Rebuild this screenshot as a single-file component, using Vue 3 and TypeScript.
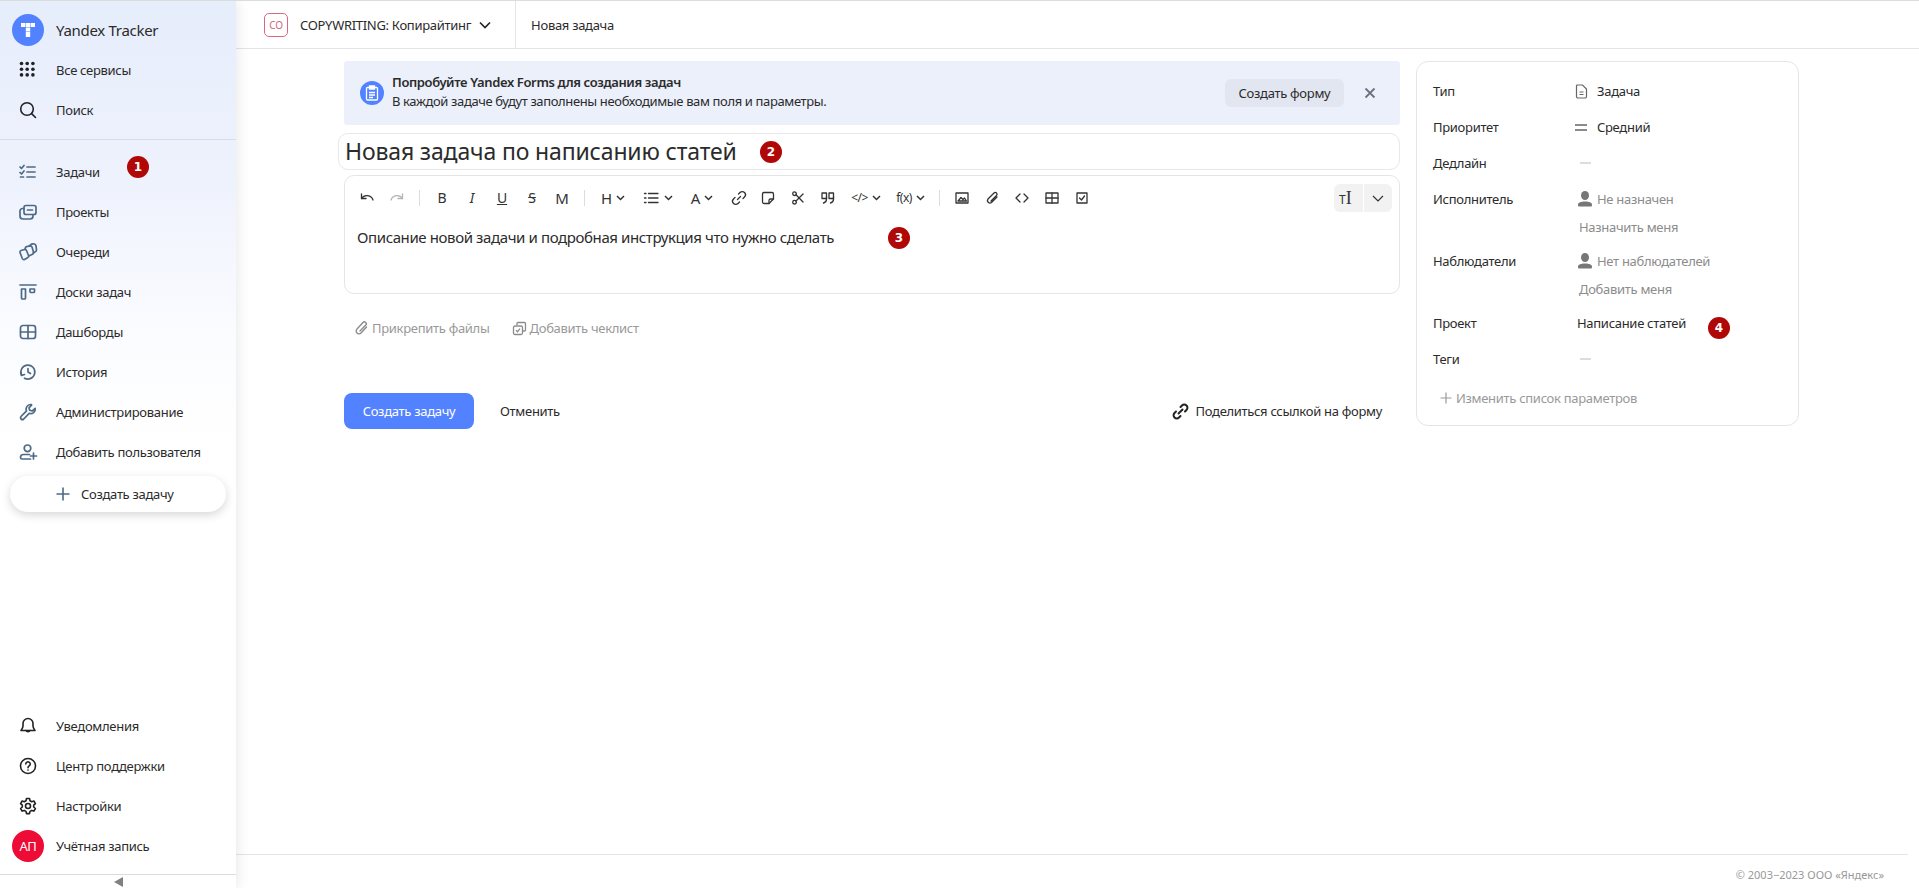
<script setup lang="ts">
interface NavItem {
  label: string;
  icon: string[];
}

const topNav: NavItem[] = [
  { label: "Задачи", icon: ["M2 5l1.5 1.5L6 3.5", "M2 10.5l1.5 1.5L6 9", "M2.5 15h3", "M9 5h8", "M9 10h8", "M9 15h8"] },
  { label: "Проекты", icon: ["M8 3.500h8a2 2 0 0 1 2 2v5a2 2 0 0 1-2 2H8a2 2 0 0 1-2-2v-5a2 2 0 0 1 2-2z", "M9.500 8h5", "M6 6.500H4.500a2.500 2.500 0 0 0-2.500 2.500v5a3 3 0 0 0 3 3h7a3 3 0 0 0 3-3v-1.500"] },
  { label: "Очереди", icon: ["M3 8.500L6.500 7.500Q8 7.200 8.500 8.500L10.500 13.500Q11 15 9.500 15.800L6.500 17.500Q5 18 4.300 16.500L2 10.500Q1.800 9 3 8.500z", "M7 7.500L7.500 5.500Q8 4.500 9.500 4.300L12 3.800Q13.500 3.800 14 5L15.500 10Q16 11.500 14.500 12.200L10.800 14", "M11.800 3.800L12.500 2.800Q13.500 1.800 15 1.800L16.500 2Q17.800 2.500 18 3.800L18.500 8Q18.500 9.500 17 10L15.300 10.800"] },
  { label: "Доски задач", icon: ["M2 3h16", "M3.500 7h4v9a1 1 0 0 1-1 1h-2a1 1 0 0 1-1-1z", "M12 7h4.500v2.500a1 1 0 0 1-1 1H13a1 1 0 0 1-1-1z"] },
  { label: "Дашборды", icon: ["M5 3.500h10A2.500 2.500 0 0 1 17.500 6v8a2.500 2.500 0 0 1-2.500 2.500H5A2.500 2.500 0 0 1 2.500 14V6A2.500 2.500 0 0 1 5 3.500z", "M10 3.500v13", "M2.500 10h15"] },
  { label: "История", icon: ["M3.500 13a7 7 0 1 1 3 3.200", "M3 10.500l.5 3 3-1", "M10 6.500V10l2.500 1.500"] },
  { label: "Администрирование", icon: ["M12.500 2.500a4.500 4.500 0 0 0-4 6.300L3 14.500a2 2 0 0 0 0 2.500 2 2 0 0 0 2.700 0l5.500-5.700a4.500 4.500 0 0 0 6-5l-3 2.700-2.500-.7-.7-2.500 2.700-2.800a4.500 4.500 0 0 0-.7-.5z"] },
  { label: "Добавить пользователя", icon: ["M9.500 3a3.300 3.300 0 1 0 0 6.600 3.300 3.300 0 0 0 0-6.600z", "M11.500 12.500H5.500a3 3 0 0 0-3 3 1.500 1.500 0 0 0 1.500 1.500h8.500", "M15.500 11v6", "M12.500 14h6"] },
];

const bottomNav: NavItem[] = [
  { label: "Уведомления", icon: ["M10 2.500a5 5 0 0 0-5 5v2.500c0 2-.8 3-2 4.500h14c-1.200-1.500-2-2.500-2-4.500V7.500a5 5 0 0 0-5-5z", "M8 14.500a2.200 2.200 0 0 0 4 0"] },
  { label: "Центр поддержки", icon: ["M10 2.500a7.500 7.500 0 1 0 0 15 7.500 7.500 0 0 0 0-15z", "M7.800 8a2.200 2.200 0 1 1 3.400 1.900c-.8.500-1.200 1-1.200 1.800", "M10 14v.1"] },
  { label: "Настройки", icon: ["M8.500 2.500h3l.5 2.200 1.700 1 2.200-.7 1.500 2.600-1.700 1.500v1.900l1.700 1.500-1.500 2.600-2.200-.7-1.700 1-.5 2.200h-3l-.5-2.200-1.700-1-2.200.7-1.500-2.600L4.300 11V9.100L2.600 7.600l1.500-2.600 2.200.7 1.700-1z", "M10 7.500a2.500 2.500 0 1 0 0 5 2.500 2.500 0 0 0 0-5z"] },
];

interface ToolIcon {
  w: number;
  text?: string;
  cls?: string;
  icon?: string[];
  chevron?: boolean;
  sep?: boolean;
}

const chevron = "M1 1l3.500 3.500L8 1";

const tools: ToolIcon[] = [
  { w: 30, icon: ["M3.500 5v4.500H8", "M3.500 9.500a6.500 6.500 0 0 1 11.500 1.500"] },
  { w: 30, cls: "dim", icon: ["M14.500 5v4.500H10", "M14.500 9.500A6.500 6.500 0 0 0 3 11"] },
  { w: 1, sep: true },
  { w: 30, text: "B", cls: "t-b" },
  { w: 30, text: "I", cls: "t-i" },
  { w: 30, text: "U", cls: "t-u" },
  { w: 30, text: "S", cls: "t-s" },
  { w: 30, text: "M", cls: "t-m" },
  { w: 1, sep: true },
  { w: 42, text: "H", cls: "t-h", chevron: true },
  { w: 46, icon: ["M6.500 4.500H16", "M6.500 9H16", "M6.500 13.500H16", "M2.500 4.500h1.500", "M2.500 9h1.500", "M2.500 13.500h1.500"], chevron: true },
  { w: 44, text: "A", cls: "t-h", chevron: true },
  { w: 29, icon: ["M7.500 10.500l3-3", "M8.500 5l1.500-1.500a3 3 0 0 1 4.500 4.500L13 9.500", "M5 8.500L3.500 10a3 3 0 0 0 4.500 4.500L9.500 13"] },
  { w: 30, icon: ["M5 3.500h8a1.500 1.500 0 0 1 1.500 1.500v5l-4.500 4.500H5A1.500 1.500 0 0 1 3.500 13V5A1.500 1.500 0 0 1 5 3.500z", "M10 14.500v-3a1.500 1.500 0 0 1 1.500-1.500h3"] },
  { w: 30, icon: ["M5.500 6.500a1.800 1.800 0 1 0 0-3.600 1.800 1.800 0 0 0 0 3.600z", "M5.500 15a1.800 1.800 0 1 0 0-3.600 1.800 1.800 0 0 0 0 3.600z", "M7 5.800L14 13", "M7 12L14 5"] },
  { w: 30, icon: ["M3 4h4.500v5.500H3z", "M10 4h4.500v5.500H10z", "M7.500 8v2a4 4 0 0 1-3 4", "M14.500 8v2a4 4 0 0 1-3 4"] },
  { w: 46, text: "</>", cls: "t-c", chevron: true },
  { w: 43, text: "f(x)", cls: "t-f", chevron: true },
  { w: 1, sep: true },
  { w: 30, icon: ["M3 4h12v10H3z", "M5 12l3-3.500 2 2 1.500-1.500 2 3z"] },
  { w: 30, icon: ["M14 8l-5.500 5.500a2.500 2.500 0 0 1-3.500-3.500L11 4a1.700 1.700 0 0 1 2.500 2.500L8 12"] },
  { w: 30, icon: ["M7 5L3 9l4 4", "M11 5l4 4-4 4"] },
  { w: 30, icon: ["M3 4h12v10H3z", "M3 9h12", "M9 4v10"] },
  { w: 30, icon: ["M4 4h10v10H4z", "M6.500 9l2 2 3-4"] },
];

interface Field {
  label: string;
  value: string;
  kind: "doc" | "prio" | "dash" | "user" | "plain";
  muted?: boolean;
  action?: string;
}

const fields: Field[] = [
  { label: "Тип", value: "Задача", kind: "doc" },
  { label: "Приоритет", value: "Средний", kind: "prio" },
  { label: "Дедлайн", value: "", kind: "dash" },
  { label: "Исполнитель", value: "Не назначен", kind: "user", muted: true, action: "Назначить меня" },
  { label: "Наблюдатели", value: "Нет наблюдателей", kind: "user", muted: true, action: "Добавить меня" },
  { label: "Проект", value: "Написание статей", kind: "plain" },
  { label: "Теги", value: "", kind: "dash" },
];
</script>

<template>
  <div class="page">
    <aside class="sidebar">
      <div class="side-head">
        <div class="row brand">
          <span class="logo">
            <svg width="16" height="16" viewBox="0 0 16 16"><path fill="#fff" d="M1 1h4.300v4H1zM5.800 1h4.400v4H5.800zM10.700 1H15v4h-4.300zM5.800 5.500h4.400v3.700H5.800zM5.800 9.700h4.400V15H5.800z" /></svg>
          </span>
          <span class="brand-name">Yandex Tracker</span>
        </div>
        <div class="row">
          <span class="ico">
            <svg width="20" height="20" viewBox="0 0 20 20" fill="#222"><g v-for="y in [3.500, 9.200, 14.900]" :key="y"><circle v-for="x in [3.500, 9.200, 14.900]" :key="x" :cx="x" :cy="y" r="1.800" /></g></svg>
          </span>
          Все сервисы
        </div>
        <div class="row">
          <span class="ico">
            <svg width="20" height="20" viewBox="0 0 20 20" fill="none" stroke="#222" stroke-width="1.600" stroke-linecap="round"><circle cx="9" cy="9" r="6.300" /><path d="M13.600 13.600L17.500 17.500" /></svg>
          </span>
          Поиск
        </div>
      </div>

      <nav class="side-nav">
        <div v-for="item in topNav" :key="item.label" class="row">
          <span class="ico">
            <svg width="20" height="20" viewBox="0 0 20 20" fill="none" stroke="#4d6a85" stroke-width="1.700" stroke-linecap="round" stroke-linejoin="round"><path v-for="d in item.icon" :key="d" :d="d" /></svg>
          </span>
          {{ item.label }}
        </div>
        <button class="create-pill">
          <svg width="16" height="16" viewBox="0 0 16 16" fill="none" stroke="#4d6a85" stroke-width="1.600"><path d="M8 1.500v13M1.500 8h13" /></svg>
          Создать задачу
        </button>
      </nav>

      <div class="side-bottom">
        <div v-for="item in bottomNav" :key="item.label" class="row">
          <span class="ico">
            <svg width="20" height="20" viewBox="0 0 20 20" fill="none" stroke="#222" stroke-width="1.600" stroke-linecap="round" stroke-linejoin="round"><path v-for="d in item.icon" :key="d" :d="d" /></svg>
          </span>
          {{ item.label }}
        </div>
        <div class="row">
          <span class="avatar">АП</span>
          Учётная запись
        </div>
      </div>
      <div class="collapse"><span class="tri"></span></div>
    </aside>

    <div class="main">
      <header class="topbar">
        <span class="queue-badge">CO</span>
        <span class="queue-name">COPYWRITING: Копирайтинг</span>
        <svg class="queue-chev" width="12" height="8" viewBox="0 0 12 8" fill="none" stroke="#222" stroke-width="1.600"><path d="M1 1.500l5 5 5-5" /></svg>
        <span class="crumb-sep"></span>
        <span class="crumb">Новая задача</span>
      </header>

      <div class="content">
        <div class="form">
          <div class="banner">
            <span class="banner-ico">
              <svg width="14" height="16" viewBox="0 0 14 16" fill="none" stroke="#fff" stroke-width="1.300"><path d="M4 2.500H2.500a1 1 0 0 0-1 1V14a1 1 0 0 0 1 1h9a1 1 0 0 0 1-1V3.500a1 1 0 0 0-1-1H10" /><path fill="#fff" d="M4.500 1h5v3h-5z" /><path d="M4 7.500h6M4 10h6M4 12.500h4" /></svg>
            </span>
            <div class="banner-text">
              <div class="banner-title">Попробуйте Yandex Forms для создания задач</div>
              <div>В каждой задаче будут заполнены необходимые вам поля и параметры.</div>
            </div>
            <button class="banner-btn">Создать форму</button>
            <svg class="banner-close" width="12" height="12" viewBox="0 0 12 12" fill="none" stroke="#6b7280" stroke-width="1.800"><path d="M1.500 1.500l9 9M10.500 1.500l-9 9" /></svg>
          </div>

          <div class="title-input">Новая задача по написанию статей</div>

          <div class="editor">
            <div class="toolbar">
              <template v-for="(tool, i) in tools" :key="i">
                <span v-if="tool.sep" class="tool-sep"></span>
                <span v-else class="tool" :class="tool.cls" :style="{ width: tool.w + 'px' }">
                  <svg v-if="tool.icon" width="18" height="18" viewBox="0 0 18 18" fill="none" stroke="currentColor" stroke-width="1.300" stroke-linecap="round" stroke-linejoin="round"><path v-for="d in tool.icon" :key="d" :d="d" /></svg>
                  <span v-if="tool.text" class="tool-text">{{ tool.text }}</span>
                  <svg v-if="tool.chevron" class="tool-chev" width="9" height="6" viewBox="0 0 9 6" fill="none" stroke="currentColor" stroke-width="1.500"><path :d="chevron" /></svg>
                </span>
              </template>
              <div class="mode">
                <span class="mode-l">T<span class="cursor">I</span></span>
                <span class="mode-r">
                  <svg width="12" height="7" viewBox="0 0 12 7" fill="none" stroke="#333" stroke-width="1.200"><path d="M1 1l5 5 5-5" /></svg>
                </span>
              </div>
            </div>
            <div class="editor-text">Описание новой задачи и подробная инструкция что нужно сделать</div>
          </div>

          <div class="attach">
            <span class="attach-item">
              <svg width="15" height="16" viewBox="0 0 15 16" fill="none" stroke="#8c8c8c" stroke-width="1.400" stroke-linecap="round"><path d="M12.500 7l-5.500 6a2.800 2.800 0 0 1-4-4l6-6.500a1.900 1.900 0 0 1 2.800 2.600L6 11" /></svg>
              Прикрепить файлы
            </span>
            <span class="attach-item">
              <svg width="15" height="15" viewBox="0 0 15 15" fill="none" stroke="#8c8c8c" stroke-width="1.300"><path d="M5 4V2.500a1 1 0 0 1 1-1h6.500a1 1 0 0 1 1 1V9a1 1 0 0 1-1 1H11" /><rect x="1.500" y="5" width="9" height="8.500" rx="1.500" /><path d="M4 9.200l1.500 1.500 2.500-3" /></svg>
              Добавить чеклист
            </span>
          </div>

          <div class="actions">
            <button class="btn-primary">Создать задачу</button>
            <span class="cancel">Отменить</span>
            <span class="share">
              <svg width="17" height="17" viewBox="0 0 17 17" fill="none" stroke="#222" stroke-width="2" stroke-linecap="round"><path d="M6.500 10.500l4-4" /><path d="M8.500 4l1.500-1.500a3 3 0 0 1 4.500 4.500L13 8.500" /><path d="M4 8.500L2.500 10a3 3 0 0 0 4.500 4.500L8.500 13" /></svg>
              Поделиться ссылкой на форму
            </span>
          </div>
        </div>

        <section class="params">
          <div v-for="f in fields" :key="f.label" class="param" :class="{ tall: f.action }">
            <div class="param-label">{{ f.label }}</div>
            <div class="param-value">
              <div class="param-line" :class="{ muted: f.muted, plain: f.kind === 'plain' }">
                <svg v-if="f.kind === 'doc'" class="pi-doc" width="13" height="15" viewBox="0 0 13 15" fill="none" stroke="#666" stroke-width="1.200"><path d="M2.500 1h5L11.500 5v7.500a1.500 1.500 0 0 1-1.500 1.500H3a1.500 1.500 0 0 1-1.500-1.500V2a1 1 0 0 1 1-1z" /><path d="M4.500 8h4M4.500 10.500h4" /></svg>
                <svg v-if="f.kind === 'prio'" class="pi-prio" width="12" height="7" viewBox="0 0 12 7" fill="none" stroke="#666" stroke-width="1.300"><path d="M0 1h12M0 6h12" /></svg>
                <span v-if="f.kind === 'dash'" class="dash"></span>
                <svg v-if="f.kind === 'user'" class="pi-user" width="14" height="16" viewBox="0 0 14 16" fill="#777"><ellipse cx="7" cy="4.500" rx="4" ry="4.500" /><path d="M0 13.500c0-2 3-3 7-3s7 1 7 3v1a1 1 0 0 1-1 1H1a1 1 0 0 1-1-1z" /></svg>
                <span v-if="f.value">{{ f.value }}</span>
              </div>
              <div v-if="f.action" class="param-action">{{ f.action }}</div>
            </div>
          </div>
          <div class="param-edit">
            <svg width="12" height="12" viewBox="0 0 12 12" fill="none" stroke="#999" stroke-width="1.200"><path d="M6 .5v11M.5 6h11" /></svg>
            Изменить список параметров
          </div>
        </section>
      </div>

      <footer class="footer">© 2003−2023 ООО «Яндекс»</footer>
    </div>

    <span class="mark m1">1</span>
    <span class="mark m2">2</span>
    <span class="mark m3">3</span>
    <span class="mark m4">4</span>
  </div>
</template>

<style>
html, body {
  margin: 0;
  background: #fff;
}
</style>

<style scoped>
.page {
  position: relative;
  display: flex;
  height: 888px;
  box-sizing: border-box;
  border-top: 1px solid #dcdcdc;
  overflow: hidden;
  font-family: "Noto Sans", "Open Sans", sans-serif;
  font-size: 13px;
  letter-spacing: -0.3px;
  color: #2b2b2b;
}

.sidebar {
  width: 236px;
  flex: none;
  display: flex;
  flex-direction: column;
  background: linear-gradient(180deg, #e6edfb 0%, #eef2fd 20%, #fbfcff 38%, #fff 50%);
  box-shadow: 2px 0 12px rgba(0, 0, 0, 0.09);
  z-index: 1;
}

.row {
  display: flex;
  align-items: center;
  height: 40px;
  padding-left: 18px;
  gap: 18px;
  white-space: nowrap;
}

.ico {
  width: 20px;
  height: 20px;
  display: flex;
}

.side-head {
  padding-top: 9px;
  height: 139px;
  box-sizing: border-box;
  border-bottom: 1px solid #d9dde3;
}

.brand {
  padding-left: 12px;
  gap: 12px;
}

.logo {
  width: 32px;
  height: 32px;
  border-radius: 50%;
  background: #5282ff;
  display: flex;
  align-items: center;
  justify-content: center;
}

.brand-name {
  font-size: 15px;
}

.side-nav {
  padding-top: 12px;
}

.create-pill {
  margin: 4px 10px 0;
  width: 216px;
  height: 36px;
  border: none;
  border-radius: 18px;
  background: #fff;
  box-shadow: 0 3px 10px rgba(0, 0, 0, 0.16);
  display: flex;
  align-items: center;
  gap: 10px;
  padding: 0 0 0 45px;
  font: inherit;
  letter-spacing: inherit;
  color: inherit;
}

.side-bottom {
  margin-top: auto;
}

.avatar {
  width: 32px;
  height: 32px;
  margin-left: -6px;
  margin-right: -6px;
  border-radius: 50%;
  background: #ec0c36;
  color: #fff;
  font-size: 13px;
  display: flex;
  align-items: center;
  justify-content: center;
}

.collapse {
  margin-top: 8px;
  height: 13px;
  border-top: 1px solid #dcdcdc;
  display: flex;
  justify-content: center;
  align-items: center;
}

.tri {
  width: 0;
  height: 0;
  border-style: solid;
  border-width: 5px 9px 5px 0;
  border-color: transparent #808080 transparent transparent;
}

.main {
  flex: 1;
  min-width: 0;
  display: flex;
  flex-direction: column;
}

.topbar {
  height: 48px;
  flex: none;
  box-sizing: border-box;
  border-bottom: 1px solid #e5e5e5;
  display: flex;
  align-items: center;
  padding-left: 28px;
}

.queue-badge {
  width: 24px;
  height: 24px;
  box-sizing: border-box;
  border: 1px solid #d9687f;
  border-radius: 5px;
  font-size: 10px;
  color: #c96a7c;
  display: flex;
  align-items: center;
  justify-content: center;
}

.queue-name {
  margin-left: 12px;
}

.queue-chev {
  margin-left: 8px;
}

.crumb-sep {
  width: 1px;
  height: 47px;
  background: #e5e5e5;
  margin: 0 15px 0 24px;
}

.content {
  flex: 1;
  display: flex;
  align-items: flex-start;
  padding: 12px 0 0 108px;
  gap: 16px;
}

.form {
  width: 1056px;
  flex: none;
}

.banner {
  height: 64px;
  border-radius: 3px;
  background: #ebf0fb;
  display: flex;
  align-items: center;
  padding: 0 16px;
}

.banner-ico {
  width: 24px;
  height: 24px;
  border-radius: 50%;
  background: #5282ff;
  display: flex;
  align-items: center;
  justify-content: center;
}

.banner-text {
  margin: -2px 0 0 8px;
  flex: 1;
  line-height: 19px;
  letter-spacing: -0.37px;
}

.banner-title {
  font-weight: 600;
}

.banner-btn {
  width: 119px;
  height: 28px;
  border: none;
  border-radius: 6px;
  background: #e1e6f1;
  font: inherit;
  letter-spacing: -0.3px;
  color: inherit;
  padding: 0;
}

.banner-close {
  margin: 0 8px 0 20px;
}

.title-input {
  margin: 8px 0 0 -6px;
  height: 37px;
  box-sizing: border-box;
  border: 1px solid #e8e8e8;
  border-radius: 10px;
  padding-left: 6px;
  line-height: 35px;
  font-size: 23px;
  letter-spacing: -0.15px;
}

.editor {
  margin-top: 5px;
  height: 119px;
  box-sizing: border-box;
  border: 1px solid #e5e5e5;
  border-radius: 10px;
  padding: 8px 7px 0;
}

.toolbar {
  display: flex;
  align-items: center;
  height: 28px;
  color: #333;
  letter-spacing: 0;
}

.tool {
  display: flex;
  align-items: center;
  justify-content: center;
  gap: 4px;
  flex: none;
}

.tool.dim {
  color: #b5b5b5;
}

.tool-sep {
  width: 1px;
  height: 16px;
  margin: 0 7px;
  background: #dcdcdc;
  flex: none;
}

.tool-text {
  font-size: 14px;
  line-height: 18px;
}

.t-i .tool-text {
  font-style: italic;
}

.t-u .tool-text {
  text-decoration: underline;
}

.t-s .tool-text {
  text-decoration: line-through;
}

.t-m .tool-text {
  font-size: 15px;
}

.t-h .tool-text {
  font-size: 15px;
}

.t-c .tool-text {
  font-size: 12px;
  letter-spacing: -0.5px;
}

.t-f .tool-text {
  font-size: 12px;
  letter-spacing: -0.5px;
}

.mode {
  margin-left: auto;
  width: 58px;
  height: 28px;
  display: flex;
  background: #f2f2f2;
  border-radius: 6px;
}

.mode-l {
  width: 24px;
  padding-left: 5px;
  font-size: 12px;
  line-height: 28px;
  border-right: 1px solid #fff;
}

.cursor {
  font-size: 18px;
  font-family: "Liberation Serif", serif;
}

.mode-r {
  flex: 1;
  display: flex;
  align-items: center;
  justify-content: center;
}

.editor-text {
  margin: 16px 0 0 5px;
  font-size: 15px;
  letter-spacing: -0.39px;
  line-height: 18px;
}

.attach {
  display: flex;
  gap: 22px;
  margin: 25px 0 0 10px;
  color: #999;
}

.attach-item {
  display: flex;
  align-items: center;
  gap: 3px;
}

.actions {
  display: flex;
  align-items: center;
  margin-top: 56px;
}

.btn-primary {
  width: 130px;
  height: 36px;
  border: none;
  border-radius: 8px;
  background: #5282ff;
  color: #fff;
  font: inherit;
  letter-spacing: inherit;
  padding: 0;
}

.cancel {
  margin-left: 26px;
}

.share {
  margin-left: auto;
  margin-right: 18px;
  display: flex;
  align-items: center;
  gap: 7px;
}

.params {
  width: 383px;
  height: 365px;
  flex: none;
  box-sizing: border-box;
  border: 1px solid #e5e5e5;
  border-radius: 12px;
  padding: 11px 16px 0;
}

.param {
  display: flex;
  min-height: 36px;
}

.param.tall {
  min-height: 62px;
}

.param-label {
  width: 141px;
  flex: none;
  line-height: 36px;
}

.param-line {
  display: flex;
  align-items: center;
  height: 36px;
}

.param-line.plain {
  padding-left: 3px;
}

.muted {
  color: #8c8c8c;
}

.dash {
  width: 11px;
  height: 2px;
  margin-left: 6px;
  background: #ddd;
}

.pi-doc {
  margin: 0 9px 0 1px;
}

.pi-prio {
  margin: 0 10px 0 1px;
}

.pi-user {
  margin: 0 5px 0 4px;
}

.param-action {
  color: #8c8c8c;
  margin: 1px 0 0 5px;
  line-height: 18px;
}

.param-edit {
  margin: 12px 0 0 7px;
  display: flex;
  align-items: center;
  gap: 4px;
  color: #999;
}

.footer {
  height: 34px;
  flex: none;
  margin-right: 11px;
  box-sizing: border-box;
  border-top: 1px solid #e5e5e5;
  padding: 12px 24px 0 0;
  text-align: right;
  font-size: 11px;
  letter-spacing: 0;
  color: #999;
}

.mark {
  position: absolute;
  width: 22px;
  height: 22px;
  border-radius: 50%;
  background: #b00707;
  color: #fff;
  font-family: "DejaVu Sans", sans-serif;
  font-size: 12px;
  font-weight: 700;
  letter-spacing: 0;
  display: flex;
  align-items: center;
  justify-content: center;
  z-index: 2;
}

.m1 { left: 127px; top: 155px; }
.m2 { left: 760px; top: 140px; }
.m3 { left: 888px; top: 226px; }
.m4 { left: 1708px; top: 316px; }
</style>
